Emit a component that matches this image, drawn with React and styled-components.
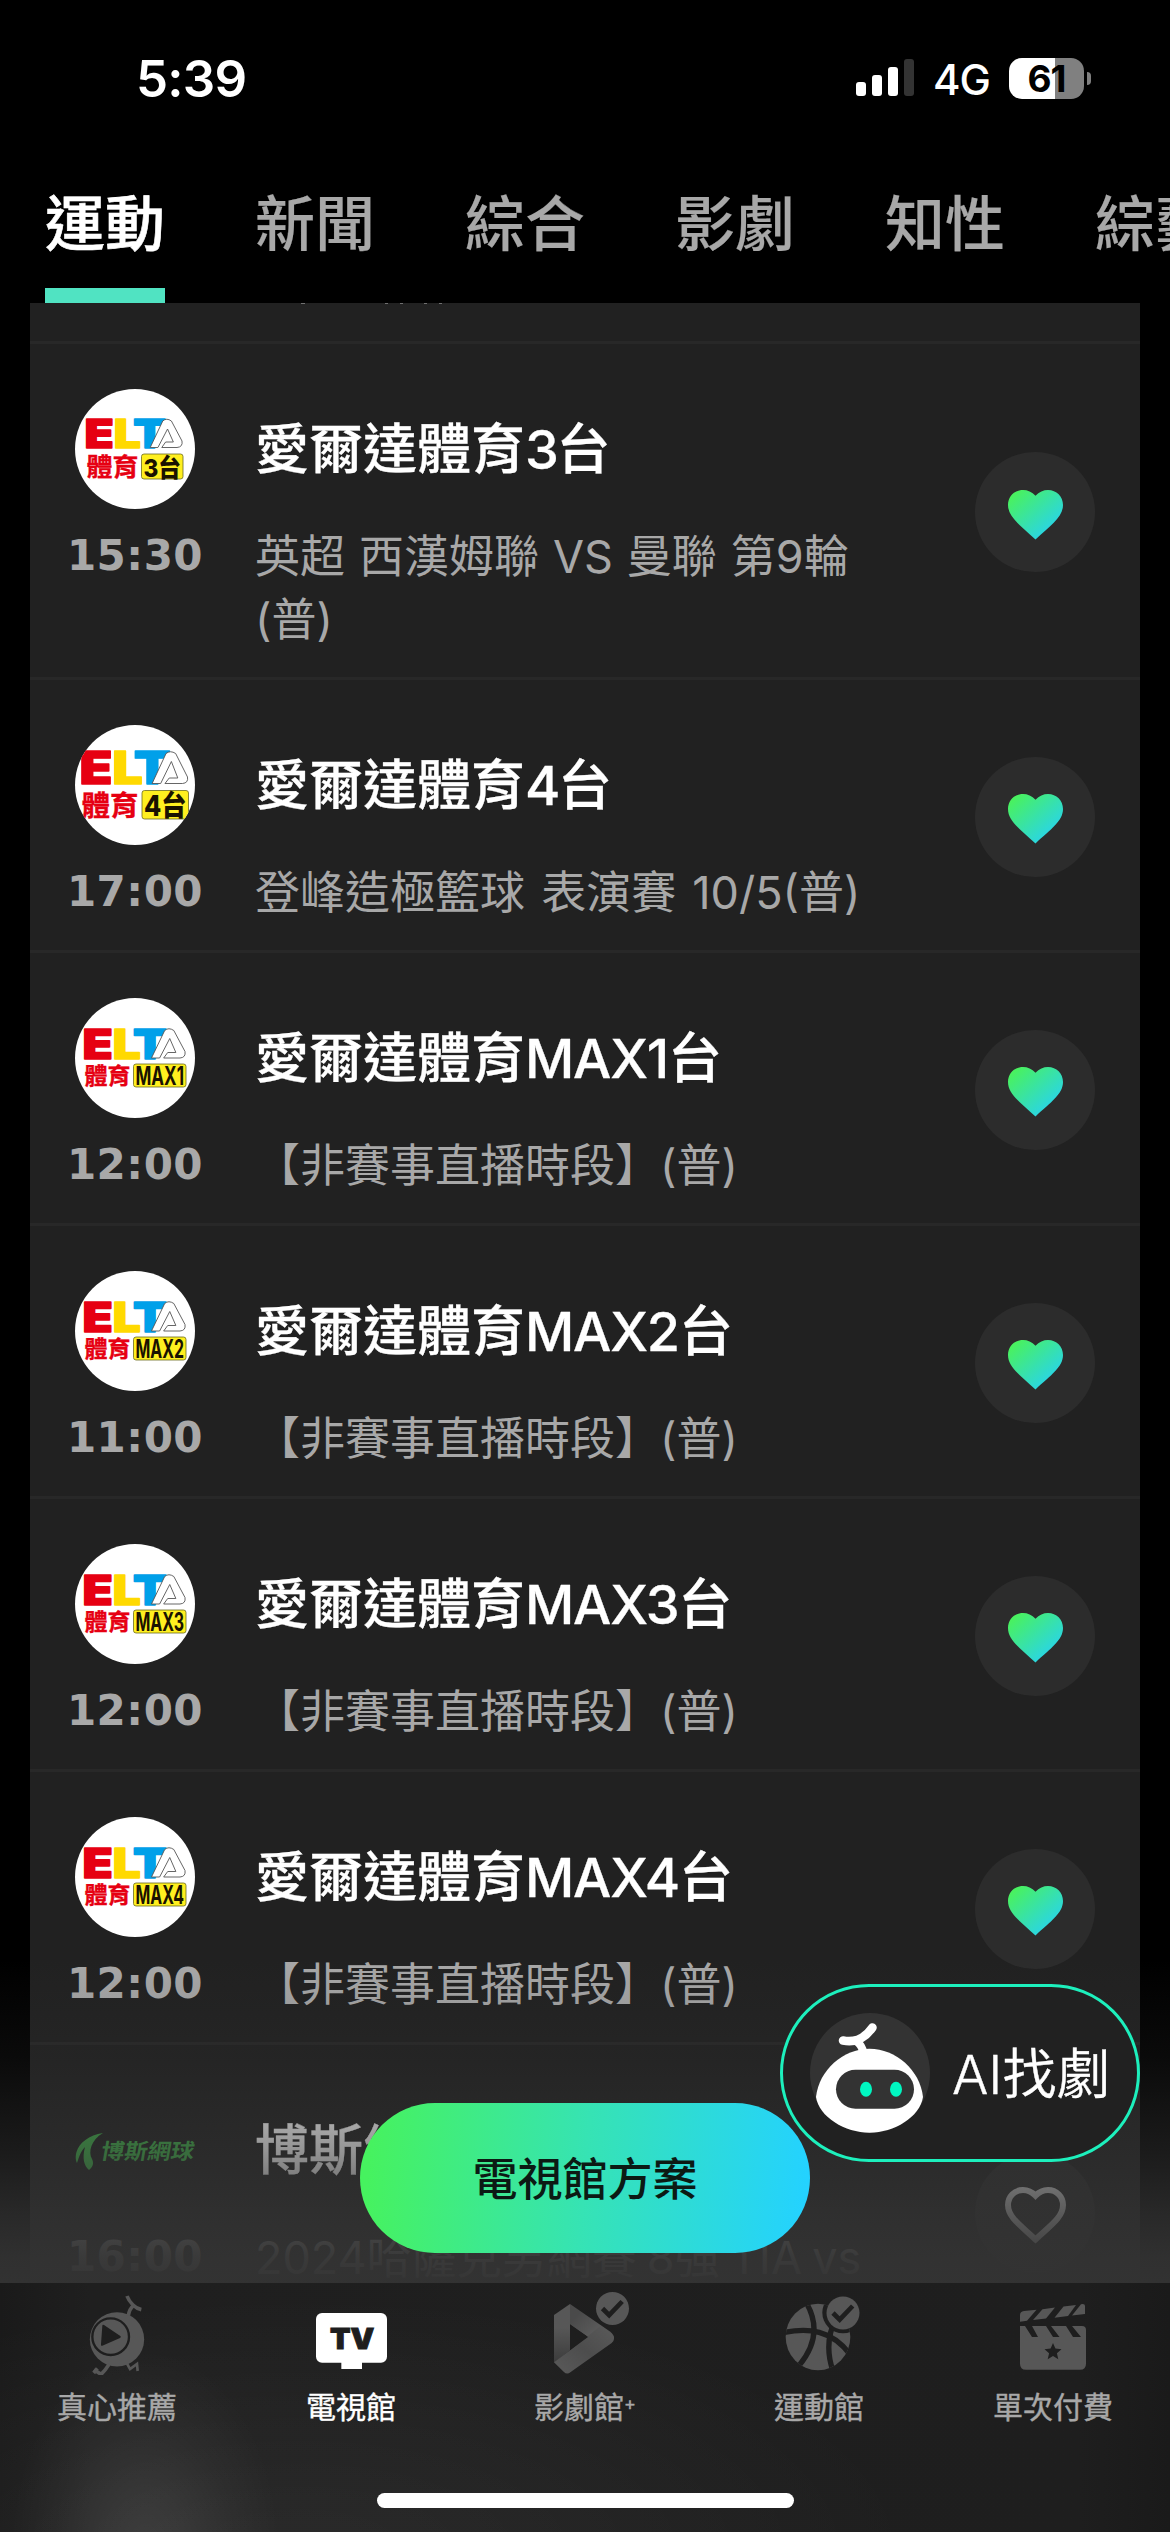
import React from "react";
import styled, { createGlobalStyle } from "styled-components";

const GlobalStyle = createGlobalStyle`
  * { box-sizing: border-box; }
  html, body { margin: 0; padding: 0; background: #000; }
  body {
    font-family: Inter, "Noto Sans CJK TC", sans-serif;
    color: #fff;
    overflow: hidden;
  }
`;

const Screen = styled.div`
  position: relative;
  width: 1170px;
  height: 2532px;
  background: #000;
  display: flex;
  flex-direction: column;
  overflow: hidden;
`;

/* ---------- status bar ---------- */

const StatusBar = styled.header`
  flex: none;
  height: 156px;
  padding: 0 79px 0 136px;
  display: flex;
  align-items: center;
  justify-content: space-between;
`;

const Clock = styled.div`
  margin-top: 1px;
  font-size: 51px;
  font-weight: 600;
  line-height: 60px;
  letter-spacing: -0.8px;
`;

const StatusRight = styled.div`
  display: flex;
  align-items: center;
`;

const Network = styled.div`
  margin: 4px 19px 0 19px;
  font-size: 42px;
  font-weight: 500;
  line-height: 48px;
  letter-spacing: -1px;
  width: 57px;
  white-space: nowrap;
`;

const Battery = styled.div`
  width: 75px;
  height: 41px;
  border-radius: 13px;
  background: linear-gradient(90deg, #fff 61%, #808080 61%);
  color: #000;
  font-size: 37px;
  font-weight: 700;
  line-height: 41px;
  letter-spacing: -1px;
  text-align: center;
`;

const BatteryTip = styled.div`
  width: 4px;
  height: 13px;
  margin-left: 3px;
  border-radius: 0 4px 4px 0;
  background: #808080;
`;

/* ---------- category tabs ---------- */

const Tabs = styled.nav`
  flex: none;
  height: 147px;
  padding-left: 45px;
  display: flex;
  gap: 90px;
`;

const Tab = styled.div`
  flex: none;
  width: 120px;
  height: 147px;
  padding-top: 24px;
  font-size: 60px;
  line-height: 88px;
  font-weight: 500;
  color: ${(p) => (p.$active ? "#fff" : "#a8a8a8")};
  border-bottom: 15px solid ${(p) => (p.$active ? "#50e3c2" : "transparent")};
  -webkit-text-stroke: ${(p) => (p.$active ? "0.6px" : "0.2px")} currentColor;
  white-space: nowrap;
`;

/* ---------- channel list ---------- */

const List = styled.main`
  flex: none;
  width: 1110px;
  height: 1980px;
  margin: 0 30px;
  background: #212121;
  overflow: hidden;
`;

const ClippedRow = styled.div`
  height: 41px;
  box-shadow: inset 0 -3px #282828;
`;

const Row = styled.section`
  height: ${(p) => (p.$tall ? 336 : 273)}px;
  box-shadow: inset 0 -3px #282828;
  display: grid;
  grid-template-columns: 210px 630px 1fr;
`;

const Side = styled.div`
  padding-top: 45px;
  display: flex;
  flex-direction: column;
  align-items: center;
`;

const Avatar = styled.div`
  width: 120px;
  height: 120px;
  border-radius: 50%;
  overflow: ${(p) => (p.$kind === "four" ? "hidden" : "visible")};
  background: ${(p) => (p.$kind ? "#fff" : "transparent")};
`;

const Time = styled.div`
  margin-top: 23px;
  font-family: "DejaVu Sans", sans-serif;
  font-weight: 700;
  font-size: 42px;
  line-height: 48px;
  letter-spacing: 0.5px;
  color: #a8a8a8;
`;

const Info = styled.div`
  padding: 68px 0 0 15px;
`;

const Title = styled.h2`
  margin: 0;
  font-size: 54px;
  line-height: 76px;
  font-weight: 500;
  white-space: nowrap;
  -webkit-text-stroke: 0.3px currentColor;
`;

const Latin = styled.span`
  letter-spacing: ${(p) => p.$track || 0}px;
`;

const Program = styled.p`
  margin: 37px 0 0;
  font-size: 45px;
  line-height: 63px;
  font-weight: 400;
  word-spacing: ${(p) => p.$gap || 0}px;
  color: #a8a8a8;
`;

const Actions = styled.div`
  display: flex;
  align-items: center;
  justify-content: flex-end;
  padding-right: 45px;
`;

const RoundButton = styled.div`
  width: 120px;
  height: 120px;
  padding-top: ${(p) => (p.$outline ? 4 : 5)}px;
  border-radius: 50%;
  background: #2c2c2c;
  display: flex;
  align-items: center;
  justify-content: center;
`;

/* ---------- floating layer ---------- */

const Fade = styled.div`
  position: absolute;
  left: 0;
  right: 0;
  top: 1960px;
  height: 323px;
  background: linear-gradient(
    180deg,
    rgba(51, 51, 51, 0) 0%,
    rgba(51, 51, 51, 0.2) 30%,
    rgba(51, 51, 51, 0.52) 59%,
    rgba(51, 51, 51, 0.8) 79%,
    rgba(51, 51, 51, 0.94) 92%,
    rgba(51, 51, 51, 0.98) 100%
  );
`;

const PlanButton = styled.div`
  position: absolute;
  left: 360px;
  top: 2103px;
  width: 450px;
  height: 150px;
  padding-top: 2px;
  border-radius: 75px;
  background: linear-gradient(95deg, #46f25f 3%, #36e3b4 50%, #24d2ff 98%);
  color: #0c1a14;
  font-size: 45px;
  font-weight: 500;
  line-height: 150px;
  text-align: center;
`;

const AiPill = styled.div`
  position: absolute;
  left: 780px;
  top: 1984px;
  width: 360px;
  height: 178px;
  border: 3px solid #1df0bd;
  border-radius: 89px;
  background: #212121;
  padding-left: 27px;
  display: flex;
  align-items: center;
  gap: 22px;
`;

const AiLabel = styled.div`
  margin-top: 3px;
  font-size: 54px;
  line-height: 80px;
  font-weight: 350;
  -webkit-text-stroke: 0.4px currentColor;
  white-space: nowrap;
`;

/* ---------- bottom navigation ---------- */

const BottomNav = styled.footer`
  flex: none;
  height: 249px;
  background:
    radial-gradient(
      ellipse 135px 200px at 145px 266px,
      rgba(255, 255, 255, 0.1),
      rgba(255, 255, 255, 0.075) 30%,
      rgba(255, 255, 255, 0.03) 65%,
      rgba(255, 255, 255, 0) 100%
    ),
    radial-gradient(ellipse 620px 260px at 300px 270px, rgba(255, 255, 255, 0.05), rgba(255, 255, 255, 0) 100%),
    linear-gradient(90deg, #1a1a1a 0, #1f1f1f 90px, #1e1e1e 1080px, #1a1a1a 1170px);
  display: flex;
  flex-direction: column;
  align-items: center;
`;

const NavItems = styled.div`
  width: 100%;
  height: 210px;
  display: grid;
  grid-template-columns: repeat(5, 1fr);
`;

const NavItem = styled.div`
  display: flex;
  flex-direction: column;
  align-items: center;
  padding-top: 2px;
  font-size: 30px;
  line-height: 44px;
  color: ${(p) => (p.$active ? "#fff" : "#a8a8a8")};
  white-space: nowrap;
  -webkit-text-stroke: 0.4px currentColor;
`;

const NavLabel = styled.div`
  margin-top: 10px;
`;

const Plus = styled.span`
  font-size: 18px;
  vertical-align: 8px;
  line-height: 1;
`;

const HomeIndicator = styled.div`
  width: 417px;
  height: 15px;
  border-radius: 8px;
  background: #fff;
`;

/* ---------- drawings ---------- */

const CJK = '"Noto Sans CJK TC", sans-serif';

const HEART =
  "M27.5 5.7C24 2 19.5 0 15 0C6.5 0 0 6.5 0 15C0 27 12 35 27.5 49.5C43 35 55 27 55 15C55 6.5 48.5 0 40 0C35.5 0 31 2 27.5 5.7Z";

function Heart({ outline }) {
  if (outline) {
    return (
      <svg width="67" height="62" viewBox="-6 -6 67 62">
        <path d={HEART} fill="none" stroke="#f0f0f0" strokeWidth="6" />
      </svg>
    );
  }
  return (
    <svg width="55" height="50" viewBox="0 0 55 50">
      <defs>
        <linearGradient id="heartFill" x1="0" y1="0" x2="1" y2="1">
          <stop offset="0.1" stopColor="#49f15f" />
          <stop offset="0.85" stopColor="#27d3f0" />
        </linearGradient>
      </defs>
      <path d={HEART} fill="url(#heartFill)" />
    </svg>
  );
}

const eltaLayouts = {
  three: { l: 11.5, r: 108, top: 30, base: 59, low: 65, end: 90, cn: 52, box: 66.5 },
  four: { l: 6.5, r: 113.5, top: 26.5, base: 59, low: 65.5, end: 94, cn: 57, box: 67 },
  max: { l: 9.5, r: 111, top: 30.5, base: 60.5, low: 66, end: 89, cn: 46, box: 58.5 },
};

function EltaLogo({ kind, tag }) {
  const g = eltaLayouts[kind];
  const w = g.r - g.l;
  const size = (g.base - g.top) / 0.727;
  const h = g.end - g.low;
  return (
    <svg width="120" height="120" viewBox="0 0 120 120" fontFamily="Inter, sans-serif" fontWeight="900">
      <text
        transform={`translate(${g.l - 2} ${g.base}) scale(1.2 1)`}
        fontSize={size}
        strokeWidth="1.4"
        strokeLinejoin="round"
      >
        <tspan fill="#e60012" stroke="#e60012">E</tspan>
        <tspan fill="#ffd900" stroke="#ffd900">L</tspan>
        <tspan dx={-size * 0.16} fill="#00a0e9" stroke="#00a0e9">T</tspan>
      </text>
      <path
        d={`M${g.l + w * 0.66} ${g.base - 0.5}
          L${g.l + w * 0.79} ${g.top + 2} Q${g.l + w * 0.83} ${g.top - 1.5} ${g.l + w * 0.88} ${g.top + 2}
          L${g.r - 1} ${g.base - 7} Q${g.r} ${g.base - 1} ${g.r - 6} ${g.base - 0.5}
          H${g.l + w * 0.78} L${g.l + w * 0.82} ${g.base - 6} H${g.l + w * 0.9}
          L${g.l + w * 0.84} ${g.top + 10} L${g.l + w * 0.74} ${g.base - 0.5} Z`}
        fill="#fff"
        stroke="#555"
        strokeWidth="0.9"
      />
      <text
        x={g.l}
        y={g.low + h * 0.89}
        fontFamily={CJK}
        fontWeight="700"
        fontSize={h}
        textLength={g.cn}
        lengthAdjust="spacingAndGlyphs"
        fill="#e60012"
        stroke="#e60012"
        strokeWidth="0.3"
      >
        體育
      </text>
      <rect x={g.box} y={g.low} width={g.r - g.box} height={h} rx="2.5" fill="#ffef1f" stroke="#6b6a20" strokeWidth="0.8" />
      <text
        x={g.box + 2}
        y={g.low + h * 0.9}
        fontFamily={kind === "max" ? "Inter, sans-serif" : `Inter, ${CJK}`}
        fontWeight={kind === "max" ? 700 : 800}
        fontSize={h * (kind === "max" ? 1.1 : 1)}
        textLength={g.r - g.box - 4}
        lengthAdjust="spacingAndGlyphs"
        fill="#1a1200"
      >
        {tag}
      </text>
    </svg>
  );
}

function TennisLogo() {
  return (
    <svg width="120" height="120" viewBox="0 0 120 120">
      <g fill="#3fae49">
        <path d="M28 43C14 45 4 53 1.500 62C0 67 1 71 2 73C4 68 5 62 10 57C7 68 9 76 14 80C18 77 19 73 17 69C13 62 16 50 28 43Z" />
        <text
          transform="translate(25 68.5) skewX(-10)"
          fontFamily={CJK}
          fontWeight="700"
          fontSize="21.5"
          textLength="93"
          lengthAdjust="spacingAndGlyphs"
        >
          博斯網球
        </text>
      </g>
    </svg>
  );
}

function Signal() {
  return (
    <svg width="58" height="38" viewBox="0 0 58 38">
      <rect x="0" y="23" width="10" height="14" rx="3" fill="#fff" />
      <rect x="16" y="16" width="10" height="21" rx="3" fill="#fff" />
      <rect x="32" y="8" width="10" height="29" rx="3" fill="#fff" />
      <rect x="48" y="0" width="10" height="37" rx="3" fill="#333" />
    </svg>
  );
}

function Robot() {
  return (
    <svg width="120" height="120" viewBox="0 0 120 120">
      <circle cx="60" cy="60" r="60" fill="#333" />
      <path d="M33 27.500C46 30 56 24 62.500 14.500" fill="none" stroke="#fff" strokeWidth="8.500" strokeLinecap="round" />
      <path d="M46 28Q52 32 53.500 40" fill="none" stroke="#fff" strokeWidth="8" />
      <path d="M6 84C9 57 33 35.700 59.500 35.700C86 35.700 110 57 113 84C110 104 84 119.700 59.500 119.700C35 119.700 9 104 6 84Z" fill="#fff" />
      <rect x="26" y="56.700" width="78" height="39" rx="19.500" fill="#333" />
      <ellipse cx="56" cy="76.300" rx="6" ry="7.500" fill="#00f7c1" />
      <ellipse cx="86" cy="76.300" rx="6" ry="7.500" fill="#00f7c1" />
    </svg>
  );
}

const ICON = "#575757";

function NavSvg({ viewBox, children }) {
  return (
    <svg width="96" height="90" viewBox={viewBox}>
      {children}
    </svg>
  );
}

function CheckBadge({ cx, cy }) {
  return (
    <g>
      <circle cx={cx} cy={cy} r="49.500" fill={ICON} />
      <path
        d={`M${cx - 30} ${cy}L${cx - 10} ${cy + 20}L${cx + 29} ${cy - 21}`}
        fill="none"
        stroke="#1e1e1e"
        strokeWidth="14"
      />
    </g>
  );
}

function PickIcon() {
  return (
    <NavSvg viewBox="-3 0 288 270">
      <circle cx="141" cy="163" r="81.500" fill={ICON} />
      <circle cx="122" cy="155" r="55" fill={ICON} stroke="#1e1e1e" strokeWidth="7" />
      <path d="M97 122Q97 118 102 120L151 153Q155 156 150 159L97 182Q92 184 93 178Z" fill="#1e1e1e" />
      <g fill="none" stroke={ICON} strokeWidth="11">
        <path d="M171 33Q176 47 189 60Q200 71 214 74" />
        <path d="M190 62Q178 72 175 92" />
        <path d="M117 238Q106 256 93 268L72 254" />
        <path d="M71 264L82 250" />
        <path d="M171 236L180 252L201 237L203 258" strokeWidth="8" />
      </g>
    </NavSvg>
  );
}

function TvIcon() {
  return (
    <NavSvg viewBox="699 0 288 270">
      <rect x="738" y="84" width="213" height="149" rx="18" fill="#fff" />
      <rect x="814" y="225" width="62" height="27" fill="#fff" />
      <text
        x="780"
        y="192"
        fontFamily="Inter, sans-serif"
        fontWeight="900"
        fontSize="86"
        textLength="133"
        lengthAdjust="spacingAndGlyphs"
        fill="#1e1e1e"
        stroke="#1e1e1e"
        strokeWidth="3"
      >
        TV
      </text>
    </NavSvg>
  );
}

function DramaIcon() {
  return (
    <NavSvg viewBox="6 0 288 270">
      <defs>
        <linearGradient id="foldLeft" x1="0" y1="0" x2="0" y2="1">
          <stop offset="0.4" stopColor="#575757" />
          <stop offset="1" stopColor="#3c3c3c" />
        </linearGradient>
        <linearGradient id="foldTop" x1="0" y1="0" x2="1" y2="1">
          <stop offset="0.2" stopColor="#4a4a4a" />
          <stop offset="0.6" stopColor="#5a5a5a" />
          <stop offset="1" stopColor="#4c4c4c" />
        </linearGradient>
        <linearGradient id="foldLow" x1="0" y1="1" x2="1" y2="0">
          <stop offset="0" stopColor="#5a5a5a" />
          <stop offset="0.5" stopColor="#4d4d4d" />
          <stop offset="1" stopColor="#5a5a5a" />
        </linearGradient>
      </defs>
      <path d="M57 90L105 57V196L57 233Z" fill="url(#foldLeft)" />
      <path d="M105 57L226 140Q238 150 237 162L200 190L159 156L105 118Z" fill="url(#foldTop)" />
      <path d="M57 232L105 196L197 122L229 145Q245 160 230 174L106 262Q96 270 86 260Z" fill="url(#foldLow)" />
      <path d="M105 119L159 156L105 196Z" fill="#1e1e1e" />
      <CheckBadge cx={232.5} cy={70.5} />
    </NavSvg>
  );
}

function SportIcon() {
  return (
    <NavSvg viewBox="708 0 288 270">
      <defs>
        <clipPath id="ballClip">
          <ellipse cx="849" cy="156" rx="97" ry="99.500" />
        </clipPath>
      </defs>
      <g clipPath="url(#ballClip)">
        <rect x="745" y="50" width="210" height="212" fill={ICON} />
        <g fill="none" stroke="#1e1e1e" strokeWidth="16">
          <path d="M812 50C845 105 852 170 792 242" />
          <path d="M745 143C820 127 890 135 945 208" />
          <path d="M903 100C880 145 872 195 894 258" />
        </g>
        <circle cx="924" cy="83" r="62" fill="#1e1e1e" />
      </g>
      <CheckBadge cx={924} cy={84} />
    </NavSvg>
  );
}

function PayIcon() {
  return (
    <NavSvg viewBox="0 0 96 90">
      <g fill={ICON}>
        <path d="M15 36.700L22 35.800L31.500 24.700L19 26Q15 26.600 15 30Z" />
        <path d="M28 35L41 33.500L50 22.500L37.500 24.200Z" />
        <path d="M49.500 32.700L63 31L71 20L58.500 21.600Z" />
        <path d="M67 30.500L80 29V21Q80 18.500 76 19.300Z" />
        <path d="M15 41H20L27 52H33L27 41H41L48 52H54.500L46 41H61L68 52H76L67 41H77Q81 41 81 45V78.700Q81 84.700 75 84.700H21Q15 84.700 15 78.700Z" />
      </g>
      <path
        d="M48 58L50.400 63.600L56.500 64.200L51.900 68.200L53.300 74.200L48 71L42.700 74.200L44.100 68.200L39.500 64.200L45.600 63.600Z"
        fill="#1e1e1e"
      />
    </NavSvg>
  );
}

/* ---------- data ---------- */

const tabs = ["運動", "新聞", "綜合", "影劇", "知性", "綜藝"];

const off = "【非賽事直播時段】(普)";

const channels = [
  { name: ["愛爾達體育", "3", "台"], time: "15:30", program: "英超 西漢姆聯 VS 曼聯 第9輪 (普)", gap: 1.3, tall: true, kind: "three", tag: "3台" },
  { name: ["愛爾達體育", "4", "台"], time: "17:00", program: "登峰造極籃球 表演賽 10/5(普)", gap: 3.5, kind: "four", tag: "4台" },
  { name: ["愛爾達體育", "MAX1", "台"], time: "12:00", program: off, kind: "max", tag: "MAX1" },
  { name: ["愛爾達體育", "MAX2", "台"], time: "11:00", program: off, kind: "max", tag: "MAX2" },
  { name: ["愛爾達體育", "MAX3", "台"], time: "12:00", program: off, kind: "max", tag: "MAX3" },
  { name: ["愛爾達體育", "MAX4", "台"], time: "12:00", program: off, kind: "max", tag: "MAX4" },
  { name: ["博斯網球", "", ""], time: "16:00", program: "2024哈薩克男網賽 8強 TIA vs", gap: -2.5, tall: true, outline: true },
];

const navItems = [
  { label: "真心推薦", icon: PickIcon },
  { label: "電視館", icon: TvIcon, active: true },
  { label: "影劇館", icon: DramaIcon, plus: true },
  { label: "運動館", icon: SportIcon },
  { label: "單次付費", icon: PayIcon },
];

function ChannelRow({ channel }) {
  const [head, latin, tail] = channel.name;
  return (
    <Row $tall={channel.tall}>
      <Side>
        <Avatar $kind={channel.kind}>
          {channel.kind ? <EltaLogo kind={channel.kind} tag={channel.tag} /> : <TennisLogo />}
        </Avatar>
        <Time>{channel.time}</Time>
      </Side>
      <Info>
        <Title>
          {head}
          {latin && <Latin $track={latin.length > 1 ? -1.2 : -2.4}>{latin}</Latin>}
          {tail}
        </Title>
        <Program $gap={channel.gap}>{channel.program}</Program>
      </Info>
      <Actions>
        <RoundButton $outline={channel.outline}>
          <Heart outline={channel.outline} />
        </RoundButton>
      </Actions>
    </Row>
  );
}

export default function App() {
  return (
    <>
      <GlobalStyle />
      <Screen>
        <StatusBar>
          <Clock>5:39</Clock>
          <StatusRight>
            <Signal />
            <Network>4G</Network>
            <Battery>61</Battery>
            <BatteryTip />
          </StatusRight>
        </StatusBar>

        <Tabs>
          {tabs.map((t, i) => (
            <Tab key={t} $active={i === 0}>
              {t}
            </Tab>
          ))}
        </Tabs>

        <List>
          <ClippedRow>
            <svg width="460" height="2" viewBox="0 0 460 2" fill="#707070" display="block">
              <rect x="271" width="4" height="1" />
              <rect x="355" width="3" height="1" />
              <rect x="370" width="3" height="1" />
              <rect x="394" width="3" height="1" />
              <rect x="409" width="3" height="1" />
            </svg>
          </ClippedRow>
          {channels.map((c, i) => (
            <ChannelRow key={i} channel={c} />
          ))}
        </List>

        <BottomNav>
          <NavItems>
            {navItems.map(({ label, icon: Icon, active, plus }) => (
              <NavItem key={label} $active={active}>
                <Icon />
                <NavLabel>
                  {label}
                  {plus && <Plus>+</Plus>}
                </NavLabel>
              </NavItem>
            ))}
          </NavItems>
          <HomeIndicator />
        </BottomNav>

        <Fade />
        <PlanButton>電視館方案</PlanButton>
        <AiPill>
          <Robot />
          <AiLabel>AI找劇</AiLabel>
        </AiPill>
      </Screen>
    </>
  );
}
